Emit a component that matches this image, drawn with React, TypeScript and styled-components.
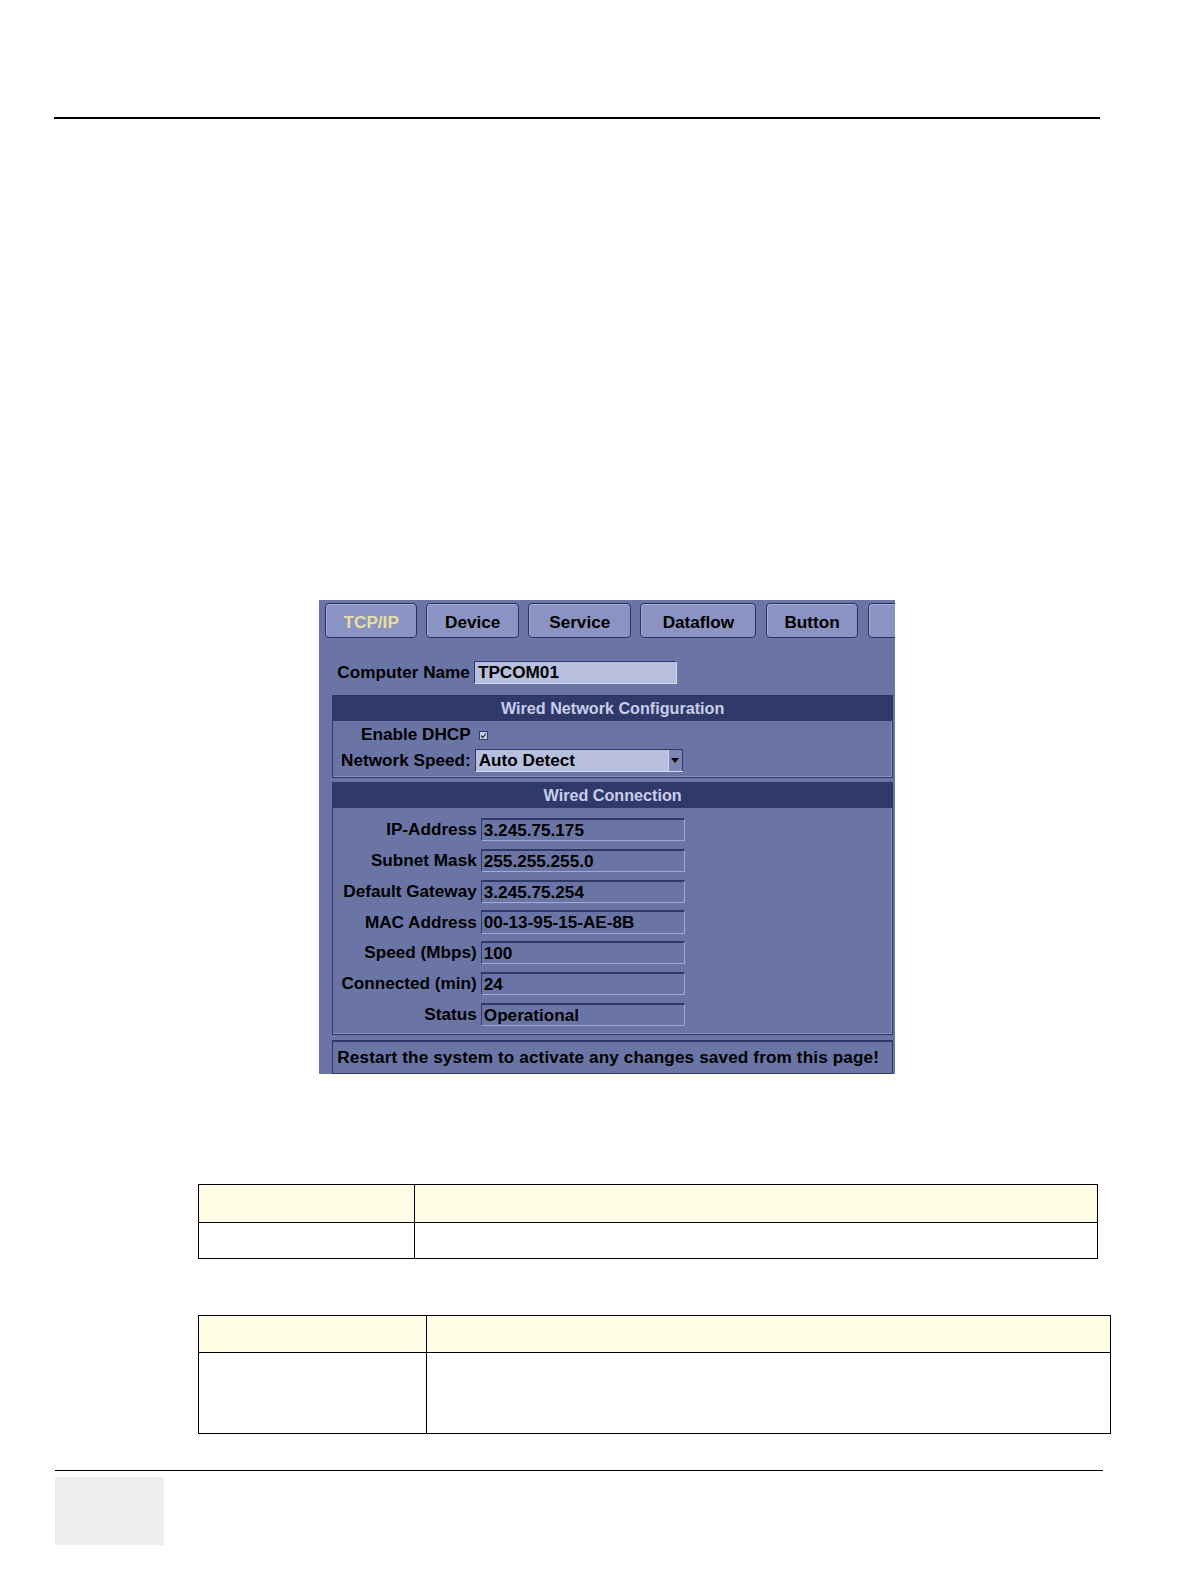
import styled, { createGlobalStyle } from "styled-components"

const GlobalStyle = createGlobalStyle`
  html, body {
    margin: 0;
    padding: 0;
    background: #ffffff;
  }
  body {
    font-family: "Liberation Sans", Arial, sans-serif;
  }
`

const tabs = [
  { label: "TCP/IP", width: 91, active: true },
  { label: "Device", width: 92 },
  { label: "Service", width: 102 },
  { label: "Dataflow", width: 115 },
  { label: "Button", width: 92 },
  { label: "", width: 60 },
]

const connection = [
  ["IP-Address", "3.245.75.175"],
  ["Subnet Mask", "255.255.255.0"],
  ["Default Gateway", "3.245.75.254"],
  ["MAC Address", "00-13-95-15-AE-8B"],
  ["Speed (Mbps)", "100"],
  ["Connected (min)", "24"],
  ["Status", "Operational"],
]

export default function App() {
  return (
    <Page>
      <GlobalStyle />
      <TopRule />

      <Panel>
        <TabBar>
          {tabs.map((t) => (
            <Tab key={t.label || "more"} $width={t.width} $active={t.active}>
              {t.label}
            </Tab>
          ))}
        </TabBar>

        <Body>
          <NameRow>
            <Label>Computer Name</Label>
            <NameField>TPCOM01</NameField>
          </NameRow>

          <Section>
            <SectionHeader>Wired Network Configuration</SectionHeader>
            <ConfigRow>
              <ConfigLabel>Enable DHCP</ConfigLabel>
              <Check>
                <svg width="9" height="9" viewBox="0 0 9 9">
                  <rect x="0.5" y="0.5" width="8" height="8" fill="#c9cde6" stroke="#2e3968" />
                  <path d="M2 4.5 L3.8 6.5 L7 2.5" fill="none" stroke="#1a1f3a" strokeWidth="1.1" />
                </svg>
              </Check>
            </ConfigRow>
            <ConfigRow>
              <ConfigLabel>Network Speed:</ConfigLabel>
              <Select>
                <SelectValue>Auto Detect</SelectValue>
                <SelectArrow>
                  <svg width="8" height="5" viewBox="0 0 8 5">
                    <path d="M0 0 H8 L4 5 Z" fill="#000" />
                  </svg>
                </SelectArrow>
              </Select>
            </ConfigRow>
          </Section>

          <ConnectionSection>
            <SectionHeader>Wired Connection</SectionHeader>
            <ConnectionList>
              {connection.map(([k, v]) => (
                <ConnRow key={k}>
                  <ConnLabel>{k}</ConnLabel>
                  <ValueField>{v}</ValueField>
                </ConnRow>
              ))}
            </ConnectionList>
          </ConnectionSection>

          <Footer>Restart the system to activate any changes saved from this page!</Footer>
        </Body>
      </Panel>

      <DocTable width={891} split={214} headH={38} bodyH={35} mt={109} />
      <DocTable width={904} split={226} headH={37} bodyH={80} mt={56} />

      <BottomRule />
      <FooterBox />
    </Page>
  )
}

interface IDocTableProps {
  width: number
  split: number
  headH: number
  bodyH: number
  mt: number
}

function DocTable({ width, split, headH, bodyH, mt }: IDocTableProps) {
  return (
    <Table $width={width} $split={split} $mt={mt}>
      <HeadCell $h={headH} />
      <HeadCell $h={headH} />
      <BodyCell $h={bodyH} />
      <BodyCell $h={bodyH} />
    </Table>
  )
}

// the capture comes out ~1% smaller than the layout, so scale back up
const Page = styled.div`
  zoom: 1.0101;
  padding-top: 116px;
  height: 1530px;
  box-sizing: border-box;
  overflow: hidden;
`

const TopRule = styled.div`
  margin-left: 53px;
  width: 1036px;
  height: 2px;
  background: #000;
`

const Panel = styled.div`
  margin: 476px 0 0 316px;
  width: 570px;
  height: 469px;
  background: #6a75a5;
  box-sizing: border-box;
  overflow: hidden;
`

const TabBar = styled.div`
  display: flex;
  gap: 9px;
  padding: 3px 0 0 6px;
  height: 35px;
`

const Tab = styled.div<{ $width: number; $active?: boolean }>`
  flex: 0 0 ${(p) => p.$width}px;
  height: 35px;
  box-sizing: border-box;
  padding-top: 3px;
  border: 1px solid #27305c;
  border-radius: 4px;
  background: #8a93c1;
  box-shadow: inset 1px 1px 0 #a9b0d6;
  display: flex;
  align-items: center;
  justify-content: center;
  font-weight: bold;
  font-size: 17px;
  color: ${(p) => (p.$active ? "#e8dfa2" : "#000")};
`

const Body = styled.div`
  padding: 22px 2px 0 13px;
  display: flex;
  flex-direction: column;
`

const Label = styled.span`
  font-weight: bold;
  font-size: 17px;
  color: #000;
  white-space: nowrap;
`

const NameRow = styled.div`
  display: flex;
  align-items: center;
  height: 23px;
  padding-left: 5px;
  gap: 4px;
`

const NameField = styled.div`
  width: 201px;
  height: 23px;
  box-sizing: border-box;
  background: #b9bfde;
  border-top: 1px solid #2e3968;
  border-left: 1px solid #2e3968;
  border-bottom: 1px solid #d2d6ee;
  border-right: 1px solid #d2d6ee;
  padding-left: 3px;
  font-weight: bold;
  font-size: 17px;
  line-height: 21px;
  color: #000;
`

const Section = styled.div`
  margin-top: 11px;
  height: 82px;
  box-sizing: border-box;
  border: 1px solid #2c3766;
  box-shadow: inset -1px -1px 0 #8b93bf;
  display: flex;
  flex-direction: column;
`

const SectionHeader = styled.div`
  height: 25px;
  flex: 0 0 25px;
  background: #2f3a6b;
  color: #c9cdea;
  font-weight: bold;
  font-size: 16px;
  display: flex;
  align-items: center;
  justify-content: center;
`

const ConfigRow = styled.div`
  display: flex;
  align-items: center;
  height: 26px;
  padding-left: 4px;
`

const ConfigLabel = styled(Label)`
  width: 132px;
  text-align: right;
`

const Check = styled.span`
  display: flex;
  margin-left: 8px;
  margin-top: 2px;
`

const Select = styled.div`
  margin-left: 4px;
  width: 206px;
  height: 23px;
  box-sizing: border-box;
  display: flex;
  background: #b9bfde;
  border-top: 1px solid #2e3968;
  border-left: 1px solid #2e3968;
  border-bottom: 1px solid #d2d6ee;
`

const SelectValue = styled.div`
  flex: 1;
  padding-left: 3px;
  font-weight: bold;
  font-size: 17px;
  line-height: 21px;
  color: #000;
`

const SelectArrow = styled.div`
  flex: 0 0 13px;
  background: #7c86b5;
  border-left: 1px solid #d2d6ee;
  border-right: 1px solid #2e3968;
  display: flex;
  align-items: center;
  justify-content: center;
`

const ConnectionSection = styled(Section)`
  margin-top: 4px;
  height: 251px;
`

const ConnectionList = styled.div`
  display: flex;
  flex-direction: column;
  gap: 7.5px;
  padding-top: 10px;
`

const ConnRow = styled.div`
  display: flex;
  align-items: center;
  height: 23px;
  gap: 4px;
`

const ConnLabel = styled(Label)`
  width: 142px;
  text-align: right;
`

const ValueField = styled.div`
  width: 202px;
  height: 23px;
  box-sizing: border-box;
  border-top: 2px solid #2e3968;
  border-left: 1px solid #2e3968;
  border-bottom: 1px solid #a3aad2;
  border-right: 1px solid #a3aad2;
  padding-left: 2px;
  font-weight: bold;
  font-size: 17px;
  line-height: 20px;
  color: #000;
  white-space: nowrap;
`

const Footer = styled.div`
  margin-top: 5px;
  height: 33px;
  box-sizing: border-box;
  border: 1px solid #2c3766;
  border-top-width: 2px;
  padding-left: 4px;
  display: flex;
  align-items: center;
  font-weight: bold;
  font-size: 17px;
  letter-spacing: 0.12px;
  color: #000;
  white-space: nowrap;
`

const Table = styled.div<{ $width: number; $split: number; $mt: number }>`
  margin: ${(p) => p.$mt}px 0 0 196px;
  width: ${(p) => p.$width}px;
  display: grid;
  grid-template-columns: ${(p) => p.$split}px 1fr;
  box-sizing: border-box;
  border-top: 1px solid #000;
  border-left: 1px solid #000;
`

const HeadCell = styled.div<{ $h: number }>`
  height: ${(p) => p.$h}px;
  box-sizing: border-box;
  background: #fffde6;
  border-right: 1px solid #000;
  border-bottom: 1px solid #000;
`

const BodyCell = styled.div<{ $h: number }>`
  height: ${(p) => p.$h}px;
  box-sizing: border-box;
  background: #fff;
  border-right: 1px solid #000;
  border-bottom: 1px solid #000;
`

const BottomRule = styled.div`
  margin: 35px 0 0 54px;
  width: 1038px;
  height: 1.5px;
  background: #000;
`

const FooterBox = styled.div`
  margin: 6px 0 0 54px;
  width: 108px;
  height: 73px;
  background: #efefef;
`
